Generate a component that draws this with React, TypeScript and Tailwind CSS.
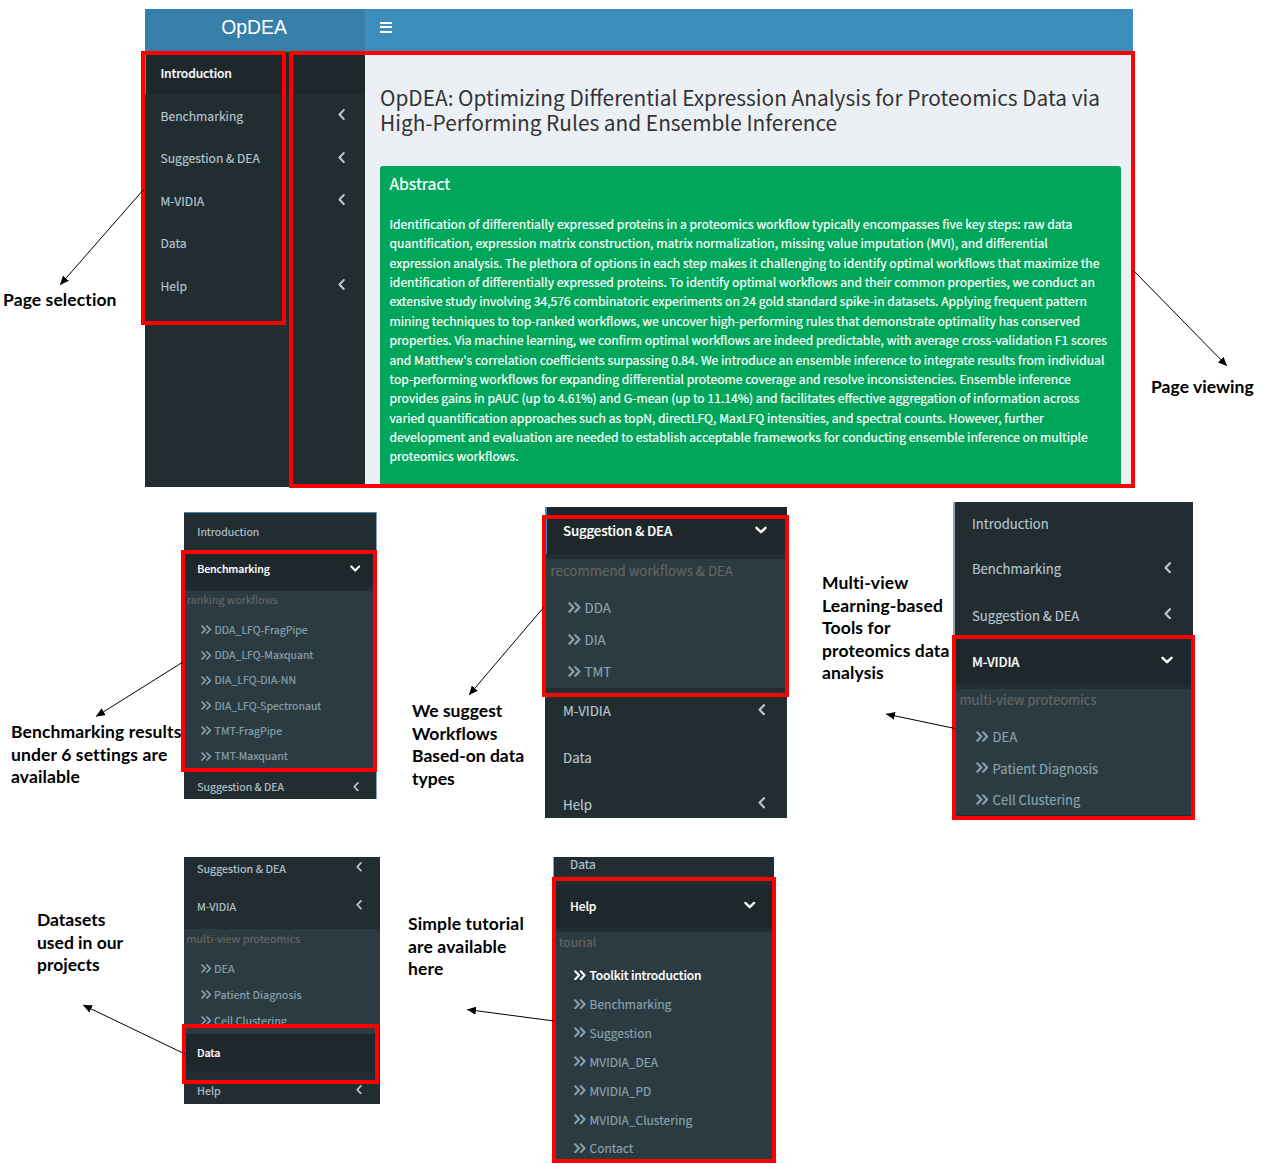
type Row = {
  kind: "item" | "active" | "head" | "sub" | "subActive" | "gap" | "subGap";
  label?: string;
  size: string;
  arrow?: "left" | "down";
};

function AngleLeft({ className }: { className: string }) {
  return (
    <svg viewBox="0 0 7 11" className={className} fill="none" stroke="currentColor" strokeWidth="2.1" strokeLinecap="round" strokeLinejoin="round">
      <path d="M5.7 1.1 L1.5 5.5 L5.7 9.9" />
    </svg>
  );
}

function AngleDown({ className }: { className: string }) {
  return (
    <svg viewBox="0 0 12 8" className={className} fill="none" stroke="currentColor" strokeWidth="2.4" strokeLinecap="round" strokeLinejoin="round">
      <path d="M1.5 1.8 L6 6.2 L10.5 1.8" />
    </svg>
  );
}

function AnglesRight({ className }: { className: string }) {
  return (
    <svg viewBox="0 0 13 11" className={className} fill="none" stroke="currentColor" strokeWidth="2.1" strokeLinecap="round" strokeLinejoin="round">
      <path d="M1.3 1.2 L5.5 5.5 L1.3 9.8 M7.3 1.2 L11.5 5.5 L7.3 9.8" />
    </svg>
  );
}

type Skin = {
  frame: string;
  mark: string;
  itemPad: string;
  headPad: string;
  subPad: string;
  angles: string;
  left: string;
  down: string;
};

function Menu({ rows, skin }: { rows: Row[]; skin: Skin }) {
  return (
    <nav className={"flex shrink-0 flex-col overflow-hidden whitespace-nowrap bg-[#222d32] font-['Noto_Sans_CJK_SC',sans-serif] leading-none [-webkit-text-stroke:0.15px] " + skin.frame}>
      {rows.map((r, i) => {
        if (r.kind === "gap") return <div key={i} className={"shrink-0 " + r.size} />;
        if (r.kind === "subGap") return <div key={i} className={"shrink-0 bg-[#2c3b41] " + r.size} />;
        if (r.kind === "head")
          return (
            <div key={i} className={"flex shrink-0 items-center bg-[#2c3b41] text-[#666666] " + skin.headPad + " " + r.size}>
              {r.label}
            </div>
          );
        if (r.kind === "sub" || r.kind === "subActive")
          return (
            <div
              key={i}
              className={
                "flex shrink-0 items-center bg-[#2c3b41] " +
                (r.kind === "sub" ? "text-[#8aa4af] " : "font-medium tracking-[-0.012em] text-white ") +
                skin.subPad + " " + r.size
              }
            >
              <AnglesRight className={skin.angles} />
              {r.label}
            </div>
          );
        return (
          <div
            key={i}
            className={
              "flex shrink-0 items-center justify-between " +
              (r.kind === "active" ? "bg-[#1e282c] font-medium tracking-[-0.012em] text-white " + skin.mark + " " : "text-[#b8c7ce] ") +
              skin.itemPad + " " + r.size
            }
          >
            <span>{r.label}</span>
            {r.arrow === "left" && <AngleLeft className={skin.left} />}
            {r.arrow === "down" && <AngleDown className={skin.down} />}
          </div>
        );
      })}
    </nav>
  );
}

const mainRows: Row[] = [
  { kind: "active", label: "Introduction", size: "h-[42px]" },
  { kind: "gap", size: "h-[0.6px]" },
  { kind: "item", label: "Benchmarking", size: "h-[42.8px]", arrow: "left" },
  { kind: "item", label: "Suggestion & DEA", size: "h-[42.3px]", arrow: "left" },
  { kind: "item", label: "M-VIDIA", size: "h-[42.4px]", arrow: "left" },
  { kind: "item", label: "Data", size: "h-[42.5px]" },
  { kind: "item", label: "Help", size: "h-[42.5px]", arrow: "left" },
];
const mainSkin: Skin = {
  frame: "w-[220px] text-[12.13px]",
  mark: "shadow-[inset_1px_0_0_#3c8dbc]",
  itemPad: "pl-[15.5px] pr-[20px]",
  headPad: "", subPad: "", angles: "",
  left: "mt-[-3px] h-[11px] w-[7px]",
  down: "",
};

const benchRows: Row[] = [
  { kind: "item", label: "Introduction", size: "h-[38px]" },
  { kind: "active", label: "Benchmarking", size: "h-[36px]", arrow: "down" },
  { kind: "gap", size: "h-[4px]" },
  { kind: "head", label: "ranking workflows", size: "h-[19px]" },
  { kind: "subGap", size: "h-[7.4px]" },
  { kind: "sub", label: "DDA_LFQ-FragPipe", size: "h-[25.3px]" },
  { kind: "sub", label: "DDA_LFQ-Maxquant", size: "h-[25.3px]" },
  { kind: "sub", label: "DIA_LFQ-DIA-NN", size: "h-[25.3px]" },
  { kind: "sub", label: "DIA_LFQ-Spectronaut", size: "h-[25.3px]" },
  { kind: "sub", label: "TMT-FragPipe", size: "h-[25.3px]" },
  { kind: "sub", label: "TMT-Maxquant", size: "h-[25.3px]" },
  { kind: "item", label: "Suggestion & DEA", size: "h-[37px]", arrow: "left" },
];
const benchSkin: Skin = {
  frame: "mt-[10px] h-[287px] w-[193px] border-r border-t border-r-[#7f9fb5] border-t-[#3c8dbc] text-[10.58px]",
  mark: "",
  itemPad: "pl-[13.3px] pr-[16px]",
  headPad: "pl-[3px]",
  subPad: "pl-[17px]",
  angles: "mr-[3px] mt-[-0.5px] h-[9px] w-[10.6px]",
  left: "mr-[1.5px] mt-[-2px] h-[9.5px] w-[6px]",
  down: "mt-[-1.5px] h-[7px] w-[10.5px]",
};

const suggestRows: Row[] = [
  { kind: "active", label: "Suggestion & DEA", size: "h-[47px]", arrow: "down" },
  { kind: "gap", size: "h-[5px]" },
  { kind: "head", label: "recommend workflows & DEA", size: "h-[23px]" },
  { kind: "subGap", size: "h-[9.5px]" },
  { kind: "sub", label: "DDA", size: "h-[32px]" },
  { kind: "sub", label: "DIA", size: "h-[32px]" },
  { kind: "sub", label: "TMT", size: "h-[32px]" },
  { kind: "item", label: "M-VIDIA", size: "h-[46.8px]", arrow: "left" },
  { kind: "item", label: "Data", size: "h-[46.8px]" },
  { kind: "item", label: "Help", size: "h-[46.8px]", arrow: "left" },
];
const suggestSkin: Skin = {
  frame: "mt-[5px] h-[311px] w-[242px] text-[13.3px]",
  mark: "shadow-[inset_2px_0_0_#3c8dbc]",
  itemPad: "pl-[18px] pr-[21.5px]",
  headPad: "pl-[5.5px]",
  subPad: "pl-[22.5px]",
  angles: "mr-[4px] mt-[-1px] h-[11px] w-[13px]",
  left: "mt-[-3px] h-[11.5px] w-[7.3px]",
  down: "mr-[-1px] mt-[-2px] h-[8px] w-[12px]",
};

const mvidiaRows: Row[] = [
  { kind: "item", label: "Introduction", size: "h-[43px]" },
  { kind: "gap", size: "h-[0.6px]" },
  { kind: "item", label: "Benchmarking", size: "h-[46.4px]", arrow: "left" },
  { kind: "item", label: "Suggestion & DEA", size: "h-[46.2px]", arrow: "left" },
  { kind: "active", label: "M-VIDIA", size: "h-[46px]", arrow: "down" },
  { kind: "gap", size: "h-[4.8px]" },
  { kind: "head", label: "multi-view proteomics", size: "h-[22px]" },
  { kind: "subGap", size: "h-[10px]" },
  { kind: "sub", label: "DEA", size: "h-[31.5px]" },
  { kind: "sub", label: "Patient Diagnosis", size: "h-[31.5px]" },
  { kind: "sub", label: "Cell Clustering", size: "h-[31.5px]" },
];
const mvidiaSkin: Skin = {
  frame: "h-[316px] w-[240px] border-l-2 border-l-[#8ea3c4] text-[13.1px]",
  mark: "",
  itemPad: "pl-[17px] pr-[22px]",
  headPad: "pl-[4.5px]",
  subPad: "pl-[21px]",
  angles: "mr-[4px] mt-[-0.5px] h-[11px] w-[12.6px]",
  left: "mt-[-3px] h-[11.5px] w-[7.3px]",
  down: "mr-[-2px] mt-[-2px] h-[8px] w-[12px]",
};

const dataRows: Row[] = [
  { kind: "item", label: "Suggestion & DEA", size: "h-[22px]", arrow: "left" },
  { kind: "gap", size: "h-[8px]" },
  { kind: "item", label: "M-VIDIA", size: "h-[38px]", arrow: "left" },
  { kind: "gap", size: "h-[4px]" },
  { kind: "head", label: "multi-view proteomics", size: "h-[19px]" },
  { kind: "subGap", size: "h-[7.5px]" },
  { kind: "sub", label: "DEA", size: "h-[26px]" },
  { kind: "sub", label: "Patient Diagnosis", size: "h-[26px]" },
  { kind: "sub", label: "Cell Clustering", size: "h-[26.5px]" },
  { kind: "active", label: "Data", size: "h-[37px]" },
  { kind: "gap", size: "h-[1px]" },
  { kind: "item", label: "Help", size: "h-[37px]", arrow: "left" },
];
const dataSkin: Skin = {
  frame: "h-[247px] w-[196px] text-[10.85px]",
  mark: "",
  itemPad: "pl-[13px] pr-[18px]",
  headPad: "pl-[2.5px]",
  subPad: "pl-[16.5px]",
  angles: "mr-[3px] mt-[-0.5px] h-[9px] w-[10.6px]",
  left: "mt-[-2px] h-[9.5px] w-[6px]",
  down: "",
};

const helpRows: Row[] = [
  { kind: "item", label: "Data", size: "h-[14px]" },
  { kind: "gap", size: "h-[14px]" },
  { kind: "active", label: "Help", size: "h-[42px]", arrow: "down" },
  { kind: "gap", size: "h-[5px]" },
  { kind: "head", label: "tourial", size: "h-[20px]" },
  { kind: "subGap", size: "h-[8.7px]" },
  { kind: "subActive", label: "Toolkit introduction", size: "h-[28.9px]" },
  { kind: "sub", label: "Benchmarking", size: "h-[28.9px]" },
  { kind: "sub", label: "Suggestion", size: "h-[28.9px]" },
  { kind: "sub", label: "MVIDIA_DEA", size: "h-[28.9px]" },
  { kind: "sub", label: "MVIDIA_PD", size: "h-[28.9px]" },
  { kind: "sub", label: "MVIDIA_Clustering", size: "h-[28.9px]" },
  { kind: "sub", label: "Contact", size: "h-[28.9px]" },
];
const helpSkin: Skin = {
  frame: "h-[305px] w-[221px] border-l border-l-[#8ea3c4] text-[12.02px]",
  mark: "",
  itemPad: "pl-[16px] pr-[18.5px]",
  headPad: "pl-[5px]",
  subPad: "pl-[20px]",
  angles: "mr-[3.5px] mt-[-0.5px] h-[10.5px] w-[12px]",
  left: "",
  down: "mt-[-1.5px] h-[8px] w-[11.5px]",
};

const abstractLines = [
  "Identification of differentially expressed proteins in a proteomics workflow typically encompasses five key steps: raw data",
  "quantification, expression matrix construction, matrix normalization, missing value imputation (MVI), and differential",
  "expression analysis. The plethora of options in each step makes it challenging to identify optimal workflows that maximize the",
  "identification of differentially expressed proteins. To identify optimal workflows and their common properties, we conduct an",
  "extensive study involving 34,576 combinatoric experiments on 24 gold standard spike-in datasets. Applying frequent pattern",
  "mining techniques to top-ranked workflows, we uncover high-performing rules that demonstrate optimality has conserved",
  "properties. Via machine learning, we confirm optimal workflows are indeed predictable, with average cross-validation F1 scores",
  "and Matthew's correlation coefficients surpassing 0.84. We introduce an ensemble inference to integrate results from individual",
  "top-performing workflows for expanding differential proteome coverage and resolve inconsistencies. Ensemble inference",
  "provides gains in pAUC (up to 4.61%) and G-mean (up to 11.14%) and facilitates effective aggregation of information across",
  "varied quantification approaches such as topN, directLFQ, MaxLFQ intensities, and spectral counts. However, further",
  "development and evaluation are needed to establish acceptable frameworks for conducting ensemble inference on multiple",
  "proteomics workflows.",
];

function Dashboard() {
  return (
    <div className="flex h-[478px] w-[988px] shrink-0 flex-col overflow-hidden">
      <header className="flex h-[43px] shrink-0 text-white">
        <div className="flex w-[220px] items-center justify-center bg-[#367fa9] pb-[6px] pr-[2px] font-['Liberation_Sans',sans-serif] text-[19.4px]">
          OpDEA
        </div>
        <div className="flex flex-1 items-center bg-[#3c8dbc] pb-[7px] pl-[15px]">
          <div className="flex w-[12px] flex-col gap-[2.5px]">
            <span className="h-[2px] bg-white" />
            <span className="h-[2px] bg-white" />
            <span className="h-[2px] bg-white" />
          </div>
        </div>
      </header>
      <div className="flex min-h-0 flex-1">
        <Menu rows={mainRows} skin={mainSkin} />
        <main className="flex flex-1 flex-col bg-[#ecf0f5] pl-[15px] pr-[12px] pt-[33px] font-['Noto_Sans_CJK_SC',sans-serif]">
          <h1 className="whitespace-nowrap text-[20.84px] leading-[25.3px] text-[#333333]">
            OpDEA: Optimizing Differential Expression Analysis for Proteomics Data via
            <br />
            High-Performing Rules and Ensemble Inference
          </h1>
          <section className="mt-[30.4px] flex-1 rounded-t-[3px] bg-[#00a65a] px-[9.5px] pt-[8px] text-white [-webkit-text-stroke:0.2px]">
            <h2 className="text-[15.8px] leading-[19px]">Abstract</h2>
            <p className="mt-[22px] whitespace-nowrap text-[12.16px] leading-[19.38px]">
              {abstractLines.map((line) => (
                <span key={line} className="block">{line}</span>
              ))}
            </p>
          </section>
        </main>
      </div>
    </div>
  );
}

function Caption({ lines, className }: { lines: string[]; className: string }) {
  return (
    <div className={"shrink-0 whitespace-nowrap font-['Lato',sans-serif] text-[17.5px] font-bold leading-[22.5px] text-black [font-variant-ligatures:none] " + className}>
      {lines.map((l) => (
        <div key={l}>{l}</div>
      ))}
    </div>
  );
}

const frames = [
  "left-[141px] top-[51px] w-[145px] h-[274px]",
  "left-[289px] top-[51px] w-[846px] h-[437px]",
  "left-[181px] top-[550px] w-[196px] h-[222px]",
  "left-[542px] top-[515px] w-[247px] h-[182px]",
  "left-[952px] top-[635px] w-[243px] h-[185px]",
  "left-[182px] top-[1024px] w-[197px] h-[60px]",
  "left-[552px] top-[877px] w-[224px] h-[286px]",
];

const arrows = [
  [144, 189, 60, 285],
  [1134, 271, 1227, 366],
  [183, 662, 96, 716.5],
  [544, 607, 469, 695],
  [955, 728.5, 886, 714],
  [185, 1054, 83, 1005],
  [554, 1021, 467, 1009.5],
];

export default function App() {
  return (
    <div className="relative flex h-[1164px] w-[1264px] flex-col overflow-hidden bg-white">
      <div className="flex h-[502px] shrink-0 items-start pt-[9px]">
        <Caption lines={["Page selection"]} className="w-[145px] pl-[3px] pt-[280px] tracking-[0.1px]" />
        <Dashboard />
        <Caption lines={["Page viewing"]} className="pl-[18px] pt-[367px] tracking-[0.05px]" />
      </div>

      <div className="flex h-[355px] shrink-0 items-start">
        <Caption lines={["Benchmarking results", "under 6 settings are", "available"]} className="w-[184px] pl-[11px] pt-[219px] tracking-[0.13px]" />
        <Menu rows={benchRows} skin={benchSkin} />
        <Caption lines={["We suggest", "Workflows", "Based-on data", "types"]} className="w-[168px] pl-[35px] pt-[198px]" />
        <Menu rows={suggestRows} skin={suggestSkin} />
        <Caption lines={["Multi-view", "Learning-based", "Tools for", "proteomics data", "analysis"]} className="w-[166px] pl-[35px] pt-[70px] tracking-[0.13px]" />
        <Menu rows={mvidiaRows} skin={mvidiaSkin} />
      </div>

      <div className="flex flex-1 items-start">
        <Caption lines={["Datasets", "used in our", "projects"]} className="w-[184px] pl-[37px] pt-[52px]" />
        <Menu rows={dataRows} skin={dataSkin} />
        <Caption lines={["Simple tutorial", "are available", "here"]} className="w-[173px] pl-[28px] pt-[56px] tracking-[0.15px]" />
        <Menu rows={helpRows} skin={helpSkin} />
      </div>

      {frames.map((f) => (
        <div key={f} className={"absolute border-4 border-[#ff0000] " + f} />
      ))}

      <svg className="absolute left-0 top-0" width="1264" height="1164" viewBox="0 0 1264 1164">
        <defs>
          <marker id="tip" viewBox="0 0 9 8" refX="9" refY="4" markerWidth="9" markerHeight="8" markerUnits="userSpaceOnUse" orient="auto">
            <path d="M0 0 L9 4 L0 8 Z" fill="#000" />
          </marker>
        </defs>
        {arrows.map(([x1, y1, x2, y2]) => (
          <line key={x1} x1={x1} y1={y1} x2={x2} y2={y2} stroke="#000" strokeWidth="1" markerEnd="url(#tip)" />
        ))}
      </svg>
    </div>
  );
}
